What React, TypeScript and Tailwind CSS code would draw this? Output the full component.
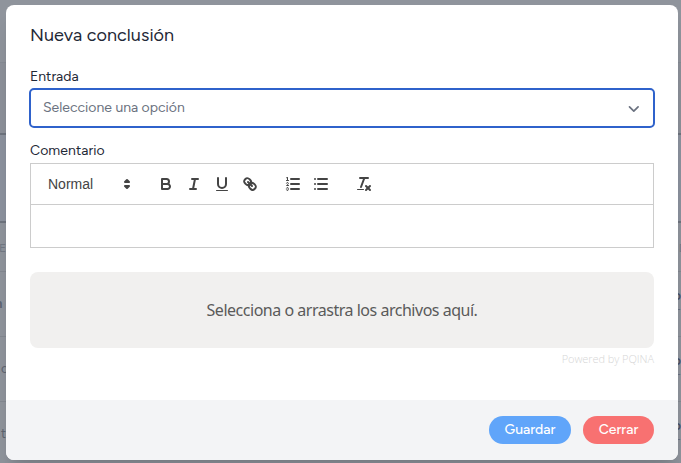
import React from "react";

const ui = "font-['Figtree',Inter,sans-serif]";

function BackdropRow({ left, right, bold }: { left: string; right: string; bold?: boolean }) {
  return (
    <div className="flex h-[65px] justify-between border-b border-[#838890] pt-[22px] text-[13px] leading-5 text-[#5d6470]">
      <span className={bold ? "-ml-[5px] font-bold" : "ml-px"}>{left}</span>
      <div className="-mt-[8px] flex w-2 flex-col items-end text-[#475066]">
        <span className="h-[14px] font-semibold">{right}</span>
        <span className="text-[#6a7180]">-</span>
      </div>
    </div>
  );
}

function Backdrop() {
  return (
    <div className={`h-[463px] w-[681px] overflow-hidden bg-[#8f949c] ${ui}`}>
      <div className="h-[63px] border-b border-[#868b94]" />
      <div className="h-[72px] border-b-2 border-[#6e747e] bg-[#8c9099]" />
      <div className="h-[88px] border-b-2 border-[#6e747e] bg-[#8c929e]" />
      <div className="flex h-[49px] justify-between border-b border-[#838890] pt-[15px] text-[12px] leading-5 text-[#737984]">
        <span className="-ml-[1px]">E</span>
        <span className="-mr-[6px]">D</span>
      </div>
      <BackdropRow left="n" right="o" bold />
      <BackdropRow left="c" right="o" />
      <BackdropRow left="t" right="o" />
    </div>
  );
}

function ToolButton({ children }: { children: React.ReactNode }) {
  return (
    <button type="button" className="h-6 w-7 px-[5px] py-[3px]">
      <svg viewBox="0 0 18 18" className="size-[18px]" fill="none" stroke="#444" strokeWidth="2" strokeLinecap="round" strokeLinejoin="round">
        {children}
      </svg>
    </button>
  );
}

function Toolbar() {
  return (
    <div className="flex h-[41px] border-b border-[#ccc] p-2">
      <div className="mr-[15px] flex h-6 w-[98px] items-center justify-between pl-[9px] pr-px font-['Liberation_Sans',Arial,sans-serif] text-[14px] font-medium text-[#444]">
        <span>Normal</span>
        <svg viewBox="0 0 18 18" className="size-[18px]" fill="#444" stroke="#444" strokeWidth="2" strokeLinecap="round" strokeLinejoin="round">
          <polygon points="7 11 9 13 11 11 7 11" />
          <polygon points="7 7 9 5 11 7 7 7" />
        </svg>
      </div>
      <div className="mr-[15px] flex">
        <ToolButton>
          <path d="M5,4H9.5A2.5,2.5,0,0,1,12,6.5v0A2.5,2.5,0,0,1,9.5,9H5A0,0,0,0,1,5,9V4A0,0,0,0,1,5,4Z" />
          <path d="M5,9h5.5A2.5,2.5,0,0,1,13,11.5v0A2.5,2.5,0,0,1,10.5,14H5a0,0,0,0,1,0,0V9A0,0,0,0,1,5,9Z" />
        </ToolButton>
        <ToolButton>
          <line x1="7" x2="13" y1="4" y2="4" />
          <line x1="5" x2="11" y1="14" y2="14" />
          <line x1="8" x2="10" y1="14" y2="4" />
        </ToolButton>
        <ToolButton>
          <path d="M5,3V9a4.012,4.012,0,0,0,4,4H9a4.012,4.012,0,0,0,4-4V3" />
          <rect fill="#444" stroke="none" height="1" rx="0.5" ry="0.5" width="12" x="3" y="15" />
        </ToolButton>
        <ToolButton>
          <line x1="7" x2="11" y1="7" y2="11" />
          <path d="M8.9,4.577a3.476,3.476,0,0,1,.36,4.679A3.476,3.476,0,0,1,4.577,8.9C3.185,7.5,2.035,6.4,4.217,4.217S7.5,3.185,8.9,4.577Z" />
          <path d="M13.423,9.1a3.476,3.476,0,0,0-4.679-.36,3.476,3.476,0,0,0,.36,4.679c1.392,1.392,2.5,2.542,4.679.36S14.815,10.5,13.423,9.1Z" />
        </ToolButton>
      </div>
      <div className="mr-[15px] flex">
        <ToolButton>
          <line x1="7" x2="15" y1="4" y2="4" />
          <line x1="7" x2="15" y1="9" y2="9" />
          <line x1="7" x2="15" y1="14" y2="14" />
          <g strokeWidth="1">
            <line x1="2.5" x2="4.5" y1="5.5" y2="5.5" />
            <path fill="#444" stroke="none" d="M3.5,6A0.5,0.5,0,0,1,3,5.5V3.085l-0.276.138A0.5,0.5,0,0,1,2.053,3c-0.124-.247-0.023-0.324.224-0.447l1-.5A0.5,0.5,0,0,1,4,2.5v3A0.5,0.5,0,0,1,3.5,6Z" />
            <path d="M4.5,10.5h-2c0-.234,1.85-1.076,1.85-2.234A0.959,0.959,0,0,0,2.5,8.156" />
            <path d="M2.5,14.846a0.959,0.959,0,0,0,1.85-.109A0.7,0.7,0,0,0,3.75,14a0.688,0.688,0,0,0,.6-0.736,0.959,0.959,0,0,0-1.85-.109" />
          </g>
        </ToolButton>
        <ToolButton>
          <line x1="6" x2="15" y1="4" y2="4" />
          <line x1="6" x2="15" y1="9" y2="9" />
          <line x1="6" x2="15" y1="14" y2="14" />
          <line x1="3" x2="3" y1="4" y2="4" />
          <line x1="3" x2="3" y1="9" y2="9" />
          <line x1="3" x2="3" y1="14" y2="14" />
        </ToolButton>
      </div>
      <ToolButton>
        <line x1="5" x2="13" y1="3" y2="3" />
        <line x1="6" x2="9.35" y1="12" y2="3" />
        <line x1="11" x2="15" y1="11" y2="15" />
        <line x1="15" x2="11" y1="11" y2="15" />
        <rect fill="#444" stroke="none" height="1" rx="0.5" ry="0.5" width="7" x="2" y="14" />
      </ToolButton>
    </div>
  );
}

export default function App() {
  return (
    <div className="relative h-[463px] w-[681px] overflow-hidden">
      <Backdrop />
      <div className={`absolute left-[6px] top-[5px] flex h-[455px] w-[672px] flex-col overflow-hidden rounded-lg bg-white text-[#1f2937] shadow-xl ${ui}`}>
        <div className="flex h-[395px] flex-col px-6 pt-4">
          <h2 className="h-7 whitespace-nowrap text-[18px] leading-7 tracking-[0.003em]">Nueva conclusión</h2>
          <label className="mt-[17px] h-5 text-[14px] leading-[21px]">Entrada</label>
          <div className="-mx-px mt-[2px] flex h-10 items-center justify-between rounded-[5px] border-2 border-[#2f62cb] pl-3 pr-3 text-[14px] text-[#6b7280]">
            <span className="-mt-[2px]">Seleccione una opción</span>
            <svg viewBox="0 0 20 20" className="mr-[-3px] mt-px size-5" fill="none" stroke="#6b7280" strokeWidth="1.7" strokeLinecap="round" strokeLinejoin="round">
              <path d="M5.5 7.8l4.3 4.3 4.3-4.3" />
            </svg>
          </div>
          <label className="mt-3 h-5 text-[14px] leading-[21px] tracking-[0.005em]">Comentario</label>
          <div className="mt-[3px] h-[85px] border border-[#ccc]">
            <Toolbar />
          </div>
          <div className="mt-6 flex h-[76px] items-center justify-center rounded-lg bg-[#f1f0ef] font-['Noto_Sans',sans-serif] text-[16px] text-[#5a5a5a]">
            <span className="whitespace-nowrap tracking-[-0.03em]">Selecciona o arrastra los archivos aquí.</span>
          </div>
          <div className="mt-[3px] text-right font-['Open_Sans',sans-serif] text-[11px] font-light leading-4 tracking-[-0.005em] text-[#d6d6d6]">Powered by PQINA</div>
        </div>
        <div className="flex h-[60px] items-center justify-end gap-3 bg-[#f3f4f6] px-6 text-[14px] font-medium text-white">
          <button type="button" className="h-7 w-[82px] rounded-full bg-[#60a5fa] pb-px">Guardar</button>
          <button type="button" className="h-7 w-[71px] rounded-full bg-[#f87171] pb-px">Cerrar</button>
        </div>
      </div>
    </div>
  );
}
